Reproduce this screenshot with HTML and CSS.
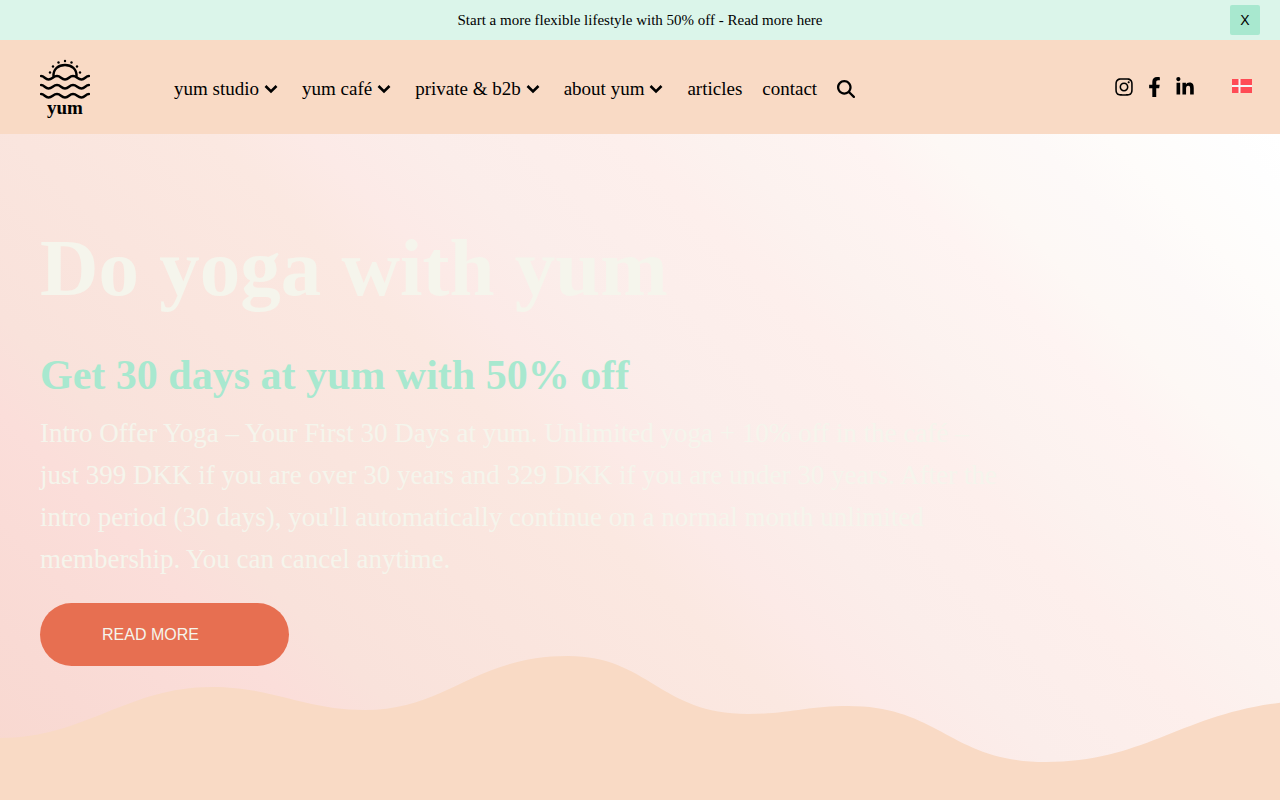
FILE: index.html
```
<!doctype html>
<html lang="en">
<head>
    <meta charset="UTF-8">
    <meta name="viewport" content="width=device-width, initial-scale=1.0">
    <title>yum</title>
    <link rel="stylesheet" href="styles.css">
</head>
<body>
    <div class="banner">
        <a class="banner-link" href="#">Start a more flexible lifestyle with 50% off - Read more here</a>
        <button class="banner-close" type="button">X</button>
    </div>

    <header class="header">
        <a class="logo" href="#" aria-label="yum">
            <svg width="50" height="60" viewBox="0 0 50 60">
                <g fill="none" stroke="#000" stroke-width="2.4" stroke-linecap="round">
                    <path d="M13.500 17.500C13 10 18.500 6 25 6C31.500 6 37 10 36.500 17.500"/>
                    <path d="M1 17C4.500 17 5 20.500 8.500 20.500C12.500 20.500 13 17 17 17C21 17 21 20.500 25 20.500C29 20.500 29 17 33 17C37 17 37.500 20.500 41.500 20.500C45 20.500 45.500 17 49 17"/>
                    <path d="M1 26C4.500 26 5 29.500 8.500 29.500C12.500 29.500 13 26 17 26C21 26 21 29.500 25 29.500C29 29.500 29 26 33 26C37 26 37.500 29.500 41.500 29.500C45 29.500 45.500 26 49 26"/>
                    <path d="M1 35C4.500 35 5 38.500 8.500 38.500C12.500 38.500 13 35 17 35C21 35 21 38.500 25 38.500C29 38.500 29 35 33 35C37 35 37.500 38.500 41.500 38.500C45 38.500 45.500 35 49 35"/>
                </g>
                <circle cx="25" cy="2" r="1.200"/>
                <circle cx="18.500" cy="3.500" r="1.200"/>
                <circle cx="31.500" cy="3.500" r="1.200"/>
                <circle cx="13" cy="7.500" r="1.200"/>
                <circle cx="37" cy="7.500" r="1.200"/>
                <circle cx="10" cy="13.500" r="1.200"/>
                <circle cx="40" cy="13.500" r="1.200"/>
                <text class="logo-text" x="25" y="55" text-anchor="middle">yum</text>
            </svg>
        </a>

        <nav class="nav">
            <a class="nav-link has-menu" href="#">yum studio
                <svg class="chevron" viewBox="0 0 14 10"><path d="M1.500 2L7 7.500L12.500 2"/></svg>
            </a>
            <a class="nav-link has-menu" href="#">yum café
                <svg class="chevron" viewBox="0 0 14 10"><path d="M1.500 2L7 7.500L12.500 2"/></svg>
            </a>
            <a class="nav-link has-menu" href="#">private &amp; b2b
                <svg class="chevron" viewBox="0 0 14 10"><path d="M1.500 2L7 7.500L12.500 2"/></svg>
            </a>
            <a class="nav-link has-menu" href="#">about yum
                <svg class="chevron" viewBox="0 0 14 10"><path d="M1.500 2L7 7.500L12.500 2"/></svg>
            </a>
            <a class="nav-link" href="#">articles</a>
            <a class="nav-link" href="#">contact</a>
            <a class="nav-link" href="#" aria-label="Search">
                <svg width="18" height="18" viewBox="0 0 512 512"><path d="M416 208c0 45.900-14.900 88.300-40 122.700L502.600 457.400c12.500 12.500 12.500 32.800 0 45.300s-32.800 12.500-45.300 0L330.700 376c-34.400 25.200-76.800 40-122.700 40C93.100 416 0 322.900 0 208S93.100 0 208 0S416 93.100 416 208zM208 352a144 144 0 1 0 0-288 144 144 0 1 0 0 288z"/></svg>
            </a>
        </nav>

        <div class="social">
            <a href="#" aria-label="Instagram">
                <svg width="18" height="20" viewBox="0 0 448 512"><path d="M224.100 141c-63.600 0-114.900 51.300-114.900 114.900s51.300 114.900 114.900 114.900S339 319.500 339 255.900 287.700 141 224.100 141zm0 189.600c-41.100 0-74.700-33.500-74.700-74.700s33.500-74.700 74.700-74.700 74.700 33.500 74.700 74.700-33.600 74.700-74.700 74.700zm146.400-194.300c0 14.900-12 26.800-26.800 26.800-14.900 0-26.800-12-26.800-26.800s12-26.800 26.800-26.800 26.800 12 26.800 26.800zm76.100 27.200c-1.700-35.900-9.900-67.700-36.200-93.900-26.200-26.200-58-34.400-93.900-36.200-37-2.100-147.900-2.100-184.900 0-35.800 1.700-67.600 9.900-93.900 36.100s-34.400 58-36.200 93.900c-2.100 37-2.100 147.900 0 184.900 1.700 35.900 9.900 67.700 36.200 93.900s58 34.400 93.900 36.200c37 2.100 147.900 2.100 184.900 0 35.900-1.700 67.700-9.900 93.900-36.200 26.200-26.200 34.400-58 36.200-93.900 2.100-37 2.100-147.800 0-184.800zM398.800 388c-7.800 19.600-22.900 34.700-42.600 42.600-29.500 11.700-99.500 9-132.100 9s-102.700 2.600-132.100-9c-19.600-7.800-34.700-22.900-42.600-42.600-11.700-29.500-9-99.500-9-132.100s-2.600-102.700 9-132.100c7.800-19.600 22.900-34.700 42.600-42.600 29.500-11.700 99.500-9 132.100-9s102.700-2.600 132.100 9c19.600 7.800 34.700 22.900 42.600 42.600 11.700 29.500 9 99.500 9 132.100s2.700 102.700-9 132.100z"/></svg>
            </a>
            <a href="#" aria-label="Facebook">
                <svg width="13" height="20" viewBox="0 0 320 512"><path d="M279.140 288l14.220-92.660h-88.910v-60.130c0-25.350 12.420-50.060 52.240-50.060h40.420V6.260S260.430 0 225.360 0c-73.220 0-121.080 44.380-121.080 124.720v70.620H22.890V288h81.390v224h100.170V288z"/></svg>
            </a>
            <a href="#" aria-label="LinkedIn">
                <svg width="18" height="20" viewBox="0 0 448 512"><path d="M100.280 448H7.400V148.900h92.880zM53.790 108.100C24.090 108.100 0 83.500 0 53.800a53.790 53.790 0 0 1 107.580 0c0 29.700-24.100 54.300-53.790 54.300zM447.900 448h-92.680V302.400c0-34.700-.7-79.200-48.290-79.200-48.290 0-55.690 37.700-55.690 76.700V448h-92.780V148.900h89.080v40.800h1.300c12.400-23.500 42.690-48.300 87.880-48.300 94 0 111.280 61.900 111.280 142.300V448z"/></svg>
            </a>
        </div>

        <a class="language" href="#" aria-label="Dansk">
            <svg width="20" height="14" viewBox="0 0 20 14">
                <path fill="#ff4b55" d="M0 0h20v14H0z"/>
                <path fill="#f5f5f5" d="M6.500 0h2v6H20v2H8.500v6h-2V8H0V6h6.500z"/>
            </svg>
        </a>
    </header>

    <main class="hero">
        <svg class="wave" viewBox="0 0 1280 150" preserveAspectRatio="none">
            <path fill="#f9dac5" d="M0 88C85 88 127 37 212 37C273 37 304 60 365 60C446 60 475 6 568 6C648 6 660 64 748 64C788 64 808 56 848 56C940 56 950 112 1046 112C1158 112 1190 50 1328 50V150H0Z"/>
        </svg>
        <div class="hero-content">
            <h1>Do yoga with yum</h1>
            <h2>Get 30 days at yum with 50% off</h2>
            <p>Intro Offer Yoga – Your First 30 Days at yum. Unlimited yoga + 10% off in the café – just 399 DKK if you are over 30 years and 329 DKK if you are under 30 years. After the intro period (30 days), you'll automatically continue on a normal month unlimited membership. You can cancel anytime.</p>
            <a class="read-more" href="#">READ MORE</a>
        </div>
    </main>
</body>
</html>
```
FILE: styles.css
```
* {
    margin: 0;
    padding: 0;
    box-sizing: border-box;
}

body {
    display: flex;
    flex-direction: column;
    min-height: 100vh;
    font-family: "Liberation Serif", serif;
    color: #000;
}

a {
    color: inherit;
    text-decoration: none;
}

svg {
    display: block;
}

.banner {
    display: flex;
    align-items: center;
    height: 40px;
    padding: 0 20px;
    background-color: #dbf5ea;
}

.banner-link {
    flex: 1;
    padding-left: 30px;
    text-align: center;
    font-size: 15px;
}

.banner-close {
    width: 30px;
    height: 30px;
    border: 0;
    border-radius: 2px;
    background-color: #a8e8cf;
    font-family: "Liberation Sans", sans-serif;
    font-size: 14px;
    color: #000;
}

.header {
    display: flex;
    align-items: center;
    padding: 19px 28px 15px 40px;
    background-color: #f9dac5;
}

.logo {
    margin-right: 84px;
}

.logo-text {
    font-size: 19px;
    font-weight: bold;
}

.nav {
    display: flex;
    align-items: center;
    gap: 20px;
}

.nav-link {
    display: flex;
    align-items: center;
    gap: 5px;
    font-size: 19px;
    white-space: nowrap;
}

.has-menu {
    padding-right: 4px;
}

.chevron {
    width: 14px;
    height: 10px;
    fill: none;
    stroke: #000;
    stroke-width: 2.6;
}

.social {
    display: flex;
    gap: 15px;
    margin-left: auto;
    margin-right: 38px;
    padding-bottom: 4px;
}

.language {
    padding-bottom: 6px;
}

.hero {
    position: relative;
    flex: 1;
    padding: 86px 40px 134px;
    background: linear-gradient(45deg, #f8d8cf 0%, #f9dad4 9%, #fbdeda 20%, #f9e2db 25%, #fbe8e1 45%, #fceae7 50%, #fbedea 56%, #fdefec 66%, #fcf2ef 71%, #fef4f2 78%, #fdf8f5 82%, #fdf9f8 87%, #fefcfa 91%, #fefefe 97%, #fff 100%);
}

.wave {
    position: absolute;
    left: 0;
    bottom: 0;
    width: 100%;
    height: 150px;
}

.hero-content {
    position: relative;
    max-width: 960px;
}

h1 {
    margin-bottom: 35px;
    font-size: 81px;
    line-height: 96px;
    color: #f5f5ec;
}

h2 {
    margin-bottom: 13px;
    font-size: 42px;
    line-height: 48px;
    color: #a8e8cf;
}

p {
    margin-bottom: 23px;
    font-size: 27px;
    line-height: 42px;
    color: #f5f5ec;
}

.read-more {
    display: inline-block;
    padding: 0 90px 0 62px;
    border-radius: 32px;
    background-color: #e76f51;
    font-family: "Liberation Sans", sans-serif;
    font-size: 16px;
    line-height: 63px;
    color: #f5f5ec;
}
```
